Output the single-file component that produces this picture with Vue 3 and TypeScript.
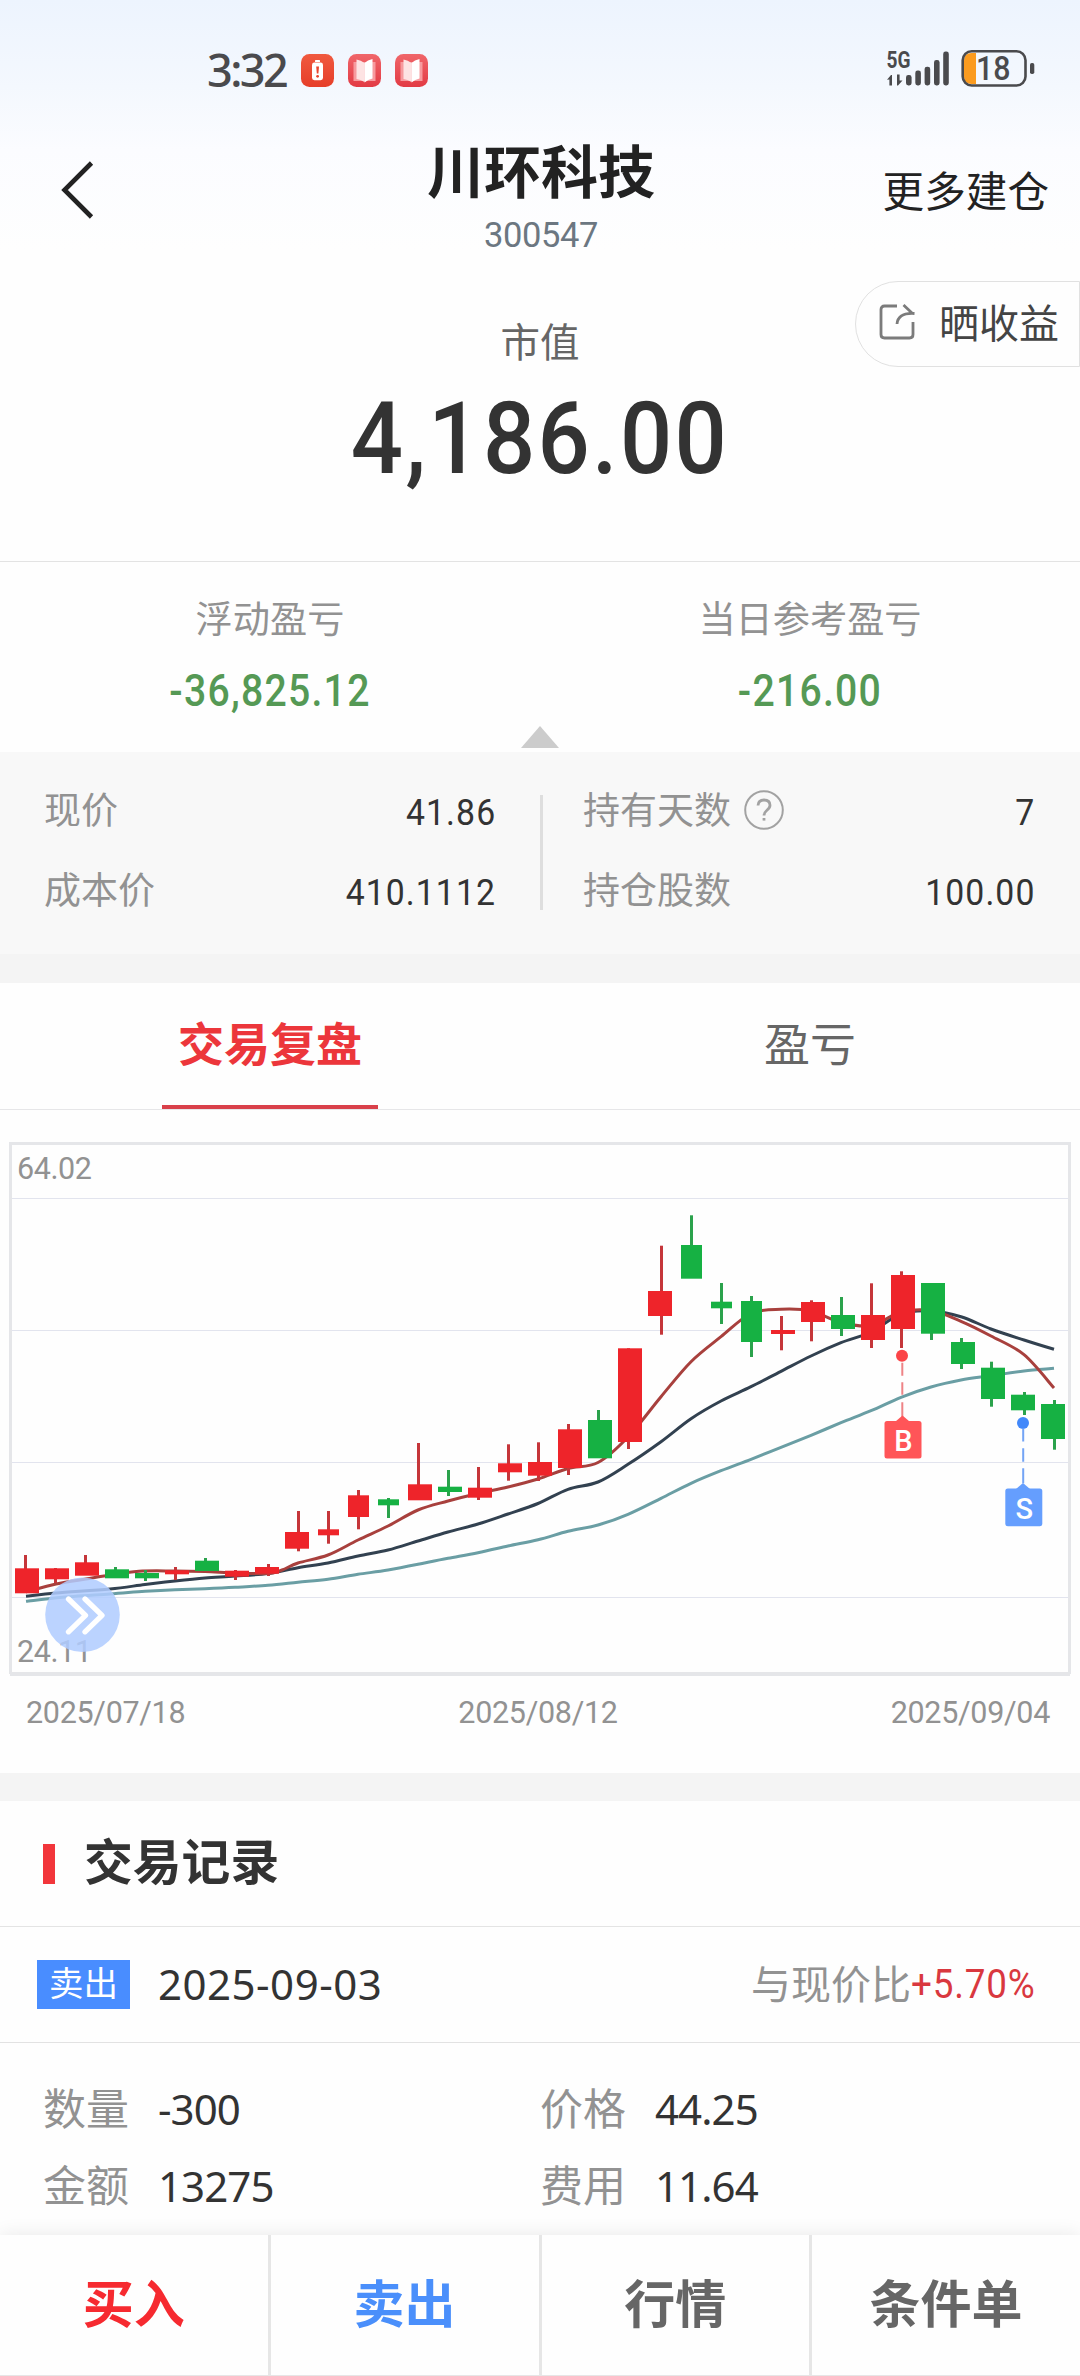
<script setup lang="ts">
type Point = [number, number]

interface Candle {
  stem: number
  left: number
  width: number
  high: number
  top: number
  bottom: number
  low: number
  up: boolean
}

// stem x, body left, body width, high, body top, body bottom, low, rising (1) or falling (0)
const rows: number[][] = [
  [24, 15, 24, 1555, 1568.3, 1593.3, 1593, 1],
  [54, 45, 24, 1568, 1568.3, 1579.3, 1583, 1],
  [84, 75, 24, 1555, 1562.3, 1575.7, 1575, 1],
  [114, 105, 24, 1567, 1569.3, 1578.3, 1578, 0],
  [144, 135, 24, 1570, 1573, 1578.3, 1581, 0],
  [174, 165, 24, 1567, 1570.3, 1574.3, 1580, 1],
  [204, 195, 24, 1558, 1560.7, 1571, 1571, 0],
  [234, 225, 24, 1570, 1570.7, 1576.7, 1580, 1],
  [267, 255, 24, 1564, 1567, 1573.7, 1576, 1],
  [297, 285, 24, 1511, 1532, 1548.7, 1551.3, 1],
  [327, 318, 21, 1511, 1529.3, 1535.3, 1543.7, 1],
  [357, 348, 21, 1490, 1495.3, 1517, 1529.3, 1],
  [387, 378, 21, 1498, 1499.3, 1505.3, 1518, 0],
  [417, 408, 24, 1443, 1484.3, 1500.3, 1500, 1],
  [447, 438, 24, 1470, 1486.7, 1492, 1496, 0],
  [477, 468, 24, 1467, 1487.7, 1497.7, 1500, 1],
  [507, 498, 24, 1444.3, 1463.3, 1472.3, 1480.7, 1],
  [537, 528, 24, 1442.3, 1462, 1475.7, 1481, 1],
  [567, 558, 24, 1424, 1429.3, 1468, 1475, 1],
  [597, 588, 24, 1410, 1420, 1458.3, 1458, 0],
  [627, 618, 24, 1348.3, 1348.3, 1442, 1449, 1],
  [660, 648, 24, 1245.7, 1291, 1316, 1334.7, 1],
  [690, 681, 21, 1215.3, 1245, 1278.7, 1278, 0],
  [720, 711, 21, 1283, 1301.7, 1308.3, 1324, 0],
  [750, 741, 21, 1296, 1301, 1342, 1357, 0],
  [780, 771, 24, 1316, 1330, 1334, 1350.3, 1],
  [810, 801, 24, 1300.3, 1302, 1322, 1341.3, 1],
  [840, 831, 24, 1297, 1315, 1329, 1336, 0],
  [870, 861, 24, 1283.3, 1315, 1340, 1348, 1],
  [900, 891, 24, 1271.3, 1275, 1329, 1348, 1],
  [930, 921, 24, 1283, 1283, 1333.7, 1340, 0],
  [960, 951, 24, 1338, 1342, 1364, 1369, 0],
  [990, 981, 24, 1361.7, 1367.7, 1399, 1406.7, 0],
  [1023, 1011, 24, 1392, 1394.7, 1410.3, 1415, 0],
  [1053, 1041, 24, 1400, 1404, 1439, 1449.7, 0],
]

const candles: Candle[] = rows.map(([stem, left, width, high, top, bottom, low, up]) => ({
  stem, left, width, high, top, bottom, low, up: up === 1,
}))

const gridLines = [1198, 1330, 1462, 1597]

const ma5: Point[] = [
  [26, 1592], [56, 1584], [86, 1579], [104, 1576], [139, 1571.3], [175, 1571], [205, 1571.5], [235, 1573],
  [268, 1573.5], [282, 1570], [298, 1563], [328, 1555], [358, 1540], [388, 1526], [418, 1510], [448, 1501],
  [478, 1493.5], [508, 1487], [538, 1479], [568, 1468.5], [598, 1462.5], [628, 1437], [661, 1396.7],
  [691, 1361.7], [721, 1336.7], [751, 1313.5], [781, 1309.3], [811, 1311], [841, 1322.5], [871, 1325.5],
  [901, 1312], [931, 1310.5], [961, 1321.3], [991, 1336], [1024, 1354.7], [1054, 1388],
]

const ma10: Point[] = [
  [26, 1596.3], [56, 1593], [110, 1589], [145, 1584.5], [175, 1581], [205, 1578], [235, 1576], [268, 1573.5],
  [298, 1567.7], [328, 1563], [358, 1556], [388, 1550], [418, 1541], [448, 1532], [478, 1524], [508, 1514],
  [538, 1503.5], [568, 1489.3], [598, 1482], [628, 1464.3], [661, 1441.7], [691, 1418.7], [721, 1401],
  [751, 1386.7], [781, 1371.3], [811, 1356], [841, 1342.7], [871, 1332], [901, 1314], [931, 1311],
  [961, 1316.7], [991, 1329], [1024, 1340], [1054, 1349.3],
]

const ma20: Point[] = [
  [26, 1601.3], [60, 1597.5], [110, 1594], [145, 1591.3], [175, 1589.7], [205, 1588.7], [235, 1587.3],
  [268, 1585.3], [298, 1582.3], [328, 1579.3], [358, 1574.3], [388, 1570], [418, 1564.3], [448, 1558.3],
  [478, 1552.7], [508, 1546], [538, 1539.7], [568, 1531.3], [598, 1525], [628, 1514.3], [661, 1498.3],
  [691, 1483.3], [721, 1470.7], [751, 1459.3], [781, 1447.3], [811, 1435.3], [841, 1422.7], [871, 1410.7],
  [901, 1397.3], [931, 1387], [961, 1380], [991, 1375.7], [1024, 1371], [1054, 1368.3],
]

// Catmull-Rom spline through the points, written as cubic segments
function smooth(pts: Point[]): string {
  let d = `M${pts[0][0]} ${pts[0][1]}`
  for (let i = 0; i < pts.length - 1; i++) {
    const a = pts[Math.max(i - 1, 0)]
    const b = pts[i]
    const c = pts[i + 1]
    const e = pts[Math.min(i + 2, pts.length - 1)]
    const x1 = b[0] + (c[0] - a[0]) / 6
    const y1 = b[1] + (c[1] - a[1]) / 6
    const x2 = c[0] - (e[0] - b[0]) / 6
    const y2 = c[1] - (e[1] - b[1]) / 6
    d += `C${x1.toFixed(1)} ${y1.toFixed(1)} ${x2.toFixed(1)} ${y2.toFixed(1)} ${c[0]} ${c[1]}`
  }
  return d
}

const averages = [
  { color: '#6a9ea4', d: smooth(ma20) },
  { color: '#324150', d: smooth(ma10) },
  { color: '#a8403d', d: smooth(ma5) },
]

const dates = ['2025/07/18', '2025/08/12', '2025/09/04']

const actions = [
  { text: '买入', tone: 'buy' },
  { text: '卖出', tone: 'sell' },
  { text: '行情', tone: 'plain' },
  { text: '条件单', tone: 'plain' },
]
</script>

<template>
  <div class="page">
    <div class="top">
      <div class="status">
        <div class="status-left">
          <span class="time">3:32</span>
          <svg class="app" viewBox="0 0 33 33">
            <defs>
              <linearGradient id="g1" x1="0" y1="0" x2="0" y2="1">
                <stop offset="0" stop-color="#f0593f" />
                <stop offset="1" stop-color="#e63e29" />
              </linearGradient>
            </defs>
            <rect width="33" height="33" rx="8.5" fill="url(#g1)" />
            <rect x="14" y="6" width="5" height="2" rx=".6" fill="#fff" />
            <rect x="11" y="8.6" width="11" height="17.6" rx="2.4" fill="#fff" />
            <path d="M15.2 12.5h2.8l-.6 7h-1.6z" fill="#e9452f" />
            <circle cx="16.6" cy="22.3" r="1.4" fill="#e9452f" />
          </svg>
          <svg v-for="n in 2" :key="n" class="app" viewBox="0 0 33 33">
            <defs>
              <linearGradient :id="'b' + n" x1="0" y1="0" x2="0" y2="1">
                <stop offset="0" stop-color="#f0666a" />
                <stop offset="1" stop-color="#e23a44" />
              </linearGradient>
            </defs>
            <rect width="33" height="33" rx="8.5" :fill="'url(#b' + n + ')'" />
            <path d="M5.5 8h22v19h-22z" fill="#f79a9e" />
            <path d="M8.5 5.5q4.5 .5 8 3.500v19q-4-2.500-8-3z" fill="#fde3e3" />
            <path d="M16.500 9q3-3 8-4v19.500q-4.500 1-8 4z" fill="#fff" />
          </svg>
        </div>
        <svg class="signal" viewBox="884 46 152 46">
          <text x="885.500" y="68.300" font-size="23.500" font-weight="700" textLength="24" lengthAdjust="spacingAndGlyphs">5G</text>
          <path d="M886 79.800l4-4.800h1v10.500h-2.600v-6zM896 74.500h2.600v6h2.900l-4.500 5h-1z" />
          <rect x="905" y="75" width="5.600" height="10.500" rx="2.400" />
          <rect x="914.300" y="70.500" width="5.600" height="15" rx="2.400" />
          <rect x="923.600" y="66.700" width="5.600" height="18.800" rx="2.400" />
          <rect x="933" y="60" width="5.600" height="25.500" rx="2.400" />
          <rect x="942.200" y="51.500" width="5.600" height="34" rx="2.400" />
          <path d="M975 53h-4.500q-7.500 0-7.500 7.500v16q0 7.500 7.500 7.500h4.500z" style="fill: #fb9b1f" />
          <rect x="961.700" y="51.300" width="62.800" height="34.200" rx="9" fill="none" class="shell" />
          <rect x="1029" y="63" width="4.300" height="11" rx="1.800" />
          <text x="975" y="80" font-size="32.500" font-weight="500" textLength="34.500" lengthAdjust="spacingAndGlyphs">18</text>
        </svg>
      </div>
      <div class="nav">
        <svg class="back" viewBox="0 0 36 60"><path d="M32.500 3L5.500 30 32.500 57" /></svg>
        <div class="heading">
          <div class="title">川环科技</div>
          <div class="code num">300547</div>
        </div>
        <div class="more">更多建仓</div>
      </div>
    </div>

    <section class="market">
      <div class="market-label">市值</div>
      <div class="market-value num">4,186.00</div>
      <div class="share">
        <svg viewBox="0 0 36 36">
          <path d="M18 2H5.500Q2 2 2 5.500v25Q2 34 5.500 34h25q3.500 0 3.500-3.500V18" />
          <path d="M24.500 1l9 8.500M35.500 9.500q-16.500-1-17.500 10.500" />
        </svg>
        <span>晒收益</span>
      </div>
    </section>

    <section class="profit">
      <div class="profit-col">
        <div class="profit-label">浮动盈亏</div>
        <div class="profit-value num">-36,825.12</div>
      </div>
      <div class="profit-col">
        <div class="profit-label">当日参考盈亏</div>
        <div class="profit-value num">-216.00</div>
      </div>
      <svg class="fold" viewBox="0 0 38 22"><path d="M19 0L38 22H0z" fill="#ccc" /></svg>
    </section>

    <section class="detail">
      <div class="detail-col">
        <div class="detail-row"><span class="key">现价</span><span class="val num">41.86</span></div>
        <div class="detail-row"><span class="key">成本价</span><span class="val num">410.1112</span></div>
      </div>
      <div class="rule"></div>
      <div class="detail-col">
        <div class="detail-row">
          <span class="key">持有天数</span>
          <svg class="help" viewBox="0 0 40 40">
            <circle cx="20" cy="20" r="18.800" />
            <path d="M14 15.500q.4-5.500 6-5.500 6 0 6 5.300 0 2.700-3.300 5.200-2.700 2.200-2.700 5" />
            <path d="M20 28v2.600" />
          </svg>
          <span class="val num">7</span>
        </div>
        <div class="detail-row"><span class="key">持仓股数</span><span class="val num">100.00</span></div>
      </div>
    </section>
    <div class="band first"></div>

    <nav class="tabs">
      <div class="tab active"><span>交易复盘</span></div>
      <div class="tab"><span>盈亏</span></div>
    </nav>

    <section class="chart">
      <svg class="plot" viewBox="0 1110 1080 570">
        <rect v-for="y in gridLines" :key="y" x="12" :y="y" width="1056" height="1" fill="#e2e4ee" />
        <path d="M9 1142h1062v3H9zM9 1142h3v532H9zM1068 1142h3v532h-3zM10 1672h1060v4H10z" fill="#e5e6e9" />
        <text class="axis" x="17" y="1179">64.02</text>
        <text class="axis" x="17" y="1662">24.11</text>
        <path v-for="a in averages" :key="a.color" :d="a.d" fill="none" :stroke="a.color" stroke-width="3" />
        <g v-for="c in candles" :key="c.stem">
          <rect :x="c.stem" :y="c.high" width="3" :height="c.low - c.high" :fill="c.up ? '#c5363a' : '#2ba24c'" />
          <rect :x="c.left" :y="c.top" :width="c.width" :height="c.bottom - c.top" :fill="c.up ? '#ee242a' : '#16b143'" />
        </g>
        <g fill="#ff5558">
          <circle cx="902" cy="1355.700" r="6" fill="#fb4447" />
          <path d="M902.300 1362.700v13M902.300 1382.300v12.500M902.300 1402.300v15" stroke="#ee8386" stroke-width="2" />
          <path d="M895.500 1421.500l7-6 7 6z" />
          <rect x="884.500" y="1421" width="37" height="37.600" rx="2.500" />
          <text class="mark" x="903.300" y="1450.700">B</text>
        </g>
        <g fill="#659efe">
          <circle cx="1023" cy="1423" r="6" fill="#4288fa" />
          <path d="M1023.200 1428.500v13M1023.200 1448.300v13.500M1023.200 1468.300v15" stroke="#73a4f5" stroke-width="2" />
          <path d="M1016 1489l7-6 7 6z" />
          <rect x="1005.300" y="1488.600" width="37" height="37.600" rx="2.500" />
          <text class="mark" x="1024.300" y="1518.700">S</text>
        </g>
        <circle cx="82.500" cy="1614.700" r="37.300" fill="#b0ccff" fill-opacity=".86" />
        <path d="M68.500 1599l17 16.300-17 16.500M85 1599l17 16.300-17 16.500" fill="none" stroke="#fff" stroke-width="5.300" stroke-linecap="round" stroke-linejoin="round" />
      </svg>
      <div class="dates num">
        <span v-for="d in dates" :key="d">{{ d }}</span>
      </div>
    </section>
    <div class="band second"></div>

    <section class="record">
      <div class="record-title"><i></i><span>交易记录</span></div>
      <div class="record-head">
        <span class="badge">卖出</span>
        <span class="day">2025-09-03</span>
        <span class="versus">与现价比</span>
        <span class="rate num">+5.70%</span>
      </div>
      <div class="record-body">
        <div class="pair"><span class="name">数量</span><span class="amount">-300</span></div>
        <div class="pair"><span class="name">价格</span><span class="amount">44.25</span></div>
        <div class="pair"><span class="name">金额</span><span class="amount">13275</span></div>
        <div class="pair"><span class="name">费用</span><span class="amount">11.64</span></div>
      </div>
    </section>

    <footer class="actions">
      <div v-for="a in actions" :key="a.text" class="action" :class="a.tone">{{ a.text }}</div>
    </footer>
  </div>
</template>

<style>
body {
  margin: 0;
  background: #fff;
}
</style>

<style scoped>
.page {
  width: 1080px;
  height: 2376px;
  overflow: hidden;
  background: #fefefe;
  font-family: "Noto Sans CJK SC", sans-serif;
  color: #333;
  white-space: nowrap;
}
.page * {
  box-sizing: border-box;
}
.num {
  font-family: Roboto, "Noto Sans CJK SC", sans-serif;
}
.top {
  height: 250px;
  background: linear-gradient(#edf4fe, #f4f8fe 35%, #fbfcff 60%, #fefefe);
}
.status {
  height: 130px;
  padding: 10px 43px 0 207px;
  display: flex;
  align-items: center;
  justify-content: space-between;
}
.status-left {
  display: flex;
  align-items: center;
  gap: 14px;
}
.time {
  width: 80px;
  font: 500 45px/60px "Noto Sans", sans-serif;
  color: #4a4a4d;
  letter-spacing: -2.6px;
}
.app {
  width: 33px;
  height: 33px;
}
.signal {
  width: 152px;
  height: 46px;
  margin-top: -3px;
  fill: #4a4a4d;
  font-family: Roboto, sans-serif;
}
.shell {
  fill: none;
  stroke: #4a4a4d;
  stroke-width: 2.6;
}
.nav {
  height: 120px;
  padding: 0 31px 0 59px;
  display: grid;
  grid-template-columns: 352px 260px 378px;
  align-items: center;
}
.back {
  width: 36px;
  height: 60px;
}
.back path {
  fill: none;
  stroke: #222;
  stroke-width: 4.6;
}
.heading {
  align-self: start;
  padding-top: 6px;
  height: 120px;
  text-align: center;
}
.title {
  font-size: 57px;
  line-height: 64px;
  font-weight: 700;
  color: #222;
}
.code {
  font-size: 34.5px;
  line-height: 70px;
  letter-spacing: -0.4px;
  color: #6c7781;
}
.more {
  padding-bottom: 3px;
  text-align: right;
  font-size: 41.6px;
  line-height: 60px;
  color: #222;
}
.market {
  position: relative;
  height: 312px;
  padding-top: 66px;
  border-bottom: 1px solid #e3e3e3;
  text-align: center;
}
.market-label {
  font-size: 39.5px;
  line-height: 48px;
  color: #666;
}
.market-value {
  margin-top: 20px;
  font-size: 101px;
  line-height: 110px;
  font-weight: 500;
  letter-spacing: 2.6px;
  transform: scaleX(0.91);
}
.share {
  position: absolute;
  top: 31px;
  right: 0;
  width: 225px;
  height: 86px;
  padding: 0 20px 0 23px;
  display: flex;
  align-items: center;
  justify-content: space-between;
  border: 1px solid #e1e1e1;
  border-radius: 43px 0 0 43px;
  font-size: 40px;
  color: #444;
}
.share span {
  padding-bottom: 7px;
}
.share svg {
  width: 36px;
  height: 36px;
  margin-bottom: 4px;
  fill: none;
  stroke: #7b7b7b;
  stroke-width: 2.8;
}
.profit {
  position: relative;
  height: 190px;
  padding-top: 31px;
  display: flex;
}
.profit-col {
  width: 540px;
  text-align: center;
}
.profit-label {
  font-size: 37.2px;
  line-height: 48px;
  color: #929292;
}
.profit-value {
  margin-top: 23px;
  font-size: 43.5px;
  line-height: 56px;
  font-weight: 500;
  letter-spacing: 1.4px;
  transform: scaleX(0.9);
  color: #559955;
}
.fold {
  position: absolute;
  left: 521px;
  bottom: 4px;
  width: 38px;
  height: 22px;
}
.detail {
  height: 202px;
  padding: 18px 45px 0 44px;
  display: flex;
  justify-content: space-between;
  background: #f8f8f8;
}
.detail-col {
  width: 452px;
}
.rule {
  width: 3px;
  height: 115px;
  margin: 25px 1px 0 5px;
  background: #dedede;
}
.detail-row {
  height: 80px;
  display: flex;
  align-items: center;
}
.key {
  padding-bottom: 4px;
  font-size: 37px;
  color: #929292;
}
.val {
  margin-left: auto;
  padding-top: 3px;
  font-size: 37.5px;
  letter-spacing: 1.2px;
  transform: scaleX(0.9);
  transform-origin: right;
}
.help {
  width: 40px;
  height: 40px;
  margin-left: 13px;
  fill: none;
  stroke: #a2a2a2;
  stroke-width: 2;
}
.help path {
  stroke-width: 2.8;
}
.band {
  background: #f4f4f4;
}
.band.first {
  height: 29px;
}
.band.second {
  height: 28px;
}
.tabs {
  height: 127px;
  display: flex;
  border-bottom: 1px solid #e6e6e8;
}
.tab {
  width: 540px;
  height: 126px;
  display: flex;
  justify-content: center;
  font-size: 46px;
  line-height: 117px;
  color: #666;
}
.tab.active span {
  width: 216px;
  height: 126px;
  border-bottom: 4px solid #d9404a;
  text-align: center;
  font-weight: 700;
  color: #ec363b;
}
.chart {
  height: 663px;
}
.plot {
  display: block;
  width: 1080px;
  height: 570px;
}
.axis {
  font: 30.5px Roboto, sans-serif;
  letter-spacing: -0.4px;
  fill: #929292;
}
.mark {
  font: 500 29px Roboto, sans-serif;
  fill: #fff;
  text-anchor: middle;
}
.dates {
  height: 65px;
  padding: 0 30px 0 26px;
  display: flex;
  justify-content: space-between;
  font-size: 30.5px;
  line-height: 65px;
  letter-spacing: -0.3px;
  color: #929292;
}
.record-title {
  height: 126px;
  padding-left: 43px;
  display: flex;
  align-items: center;
  border-bottom: 1px solid #e4e4e4;
}
.record-title i {
  width: 12px;
  height: 40px;
  background: #f2363b;
}
.record-title span {
  margin-left: 29px;
  padding-bottom: 9px;
  font-size: 48.8px;
  line-height: 60px;
  font-weight: 700;
}
.record-head {
  height: 116px;
  padding: 0 44px 0 37px;
  display: flex;
  align-items: center;
  border-bottom: 1px solid #e2e2e2;
}
.badge {
  width: 93px;
  height: 49px;
  text-align: center;
  font-size: 34.5px;
  line-height: 42px;
  color: #fff;
  background: #498dff;
}
.day {
  margin-left: 28px;
  padding-bottom: 2px;
  font: 42px/60px "Noto Sans", sans-serif;
  letter-spacing: 0.5px;
}
.versus {
  margin-left: auto;
  padding-bottom: 5px;
  font-size: 40px;
  color: #929292;
}
.rate {
  width: 125px;
  font-size: 40px;
  letter-spacing: 0.9px;
  transform: scaleX(0.92);
  transform-origin: left;
  color: #d9383f;
}
.record-body {
  padding: 27px 0 0 43px;
  display: flex;
  flex-wrap: wrap;
}
.pair {
  width: 497px;
  height: 77px;
  display: flex;
  align-items: center;
}
.name {
  width: 115px;
  padding-bottom: 5px;
  font-size: 43px;
  color: #929292;
}
.amount {
  font: 42px/60px "Noto Sans", sans-serif;
  letter-spacing: -0.9px;
}
.actions {
  position: fixed;
  left: 0;
  bottom: 0;
  width: 1080px;
  height: 141px;
  display: flex;
  background: #fefefe;
  border-bottom: 1px solid #e6e6e6;
  box-shadow: 0 0 18px rgba(0, 0, 0, 0.09);
}
.action {
  flex: 1;
  text-align: center;
  font-size: 51px;
  line-height: 132px;
  font-weight: 700;
  color: #666;
}
.action + .action {
  border-left: 3px solid #e6e6e6;
}
.action.buy {
  color: #f62a30;
}
.action.sell {
  color: #4a8ffb;
}
</style>
